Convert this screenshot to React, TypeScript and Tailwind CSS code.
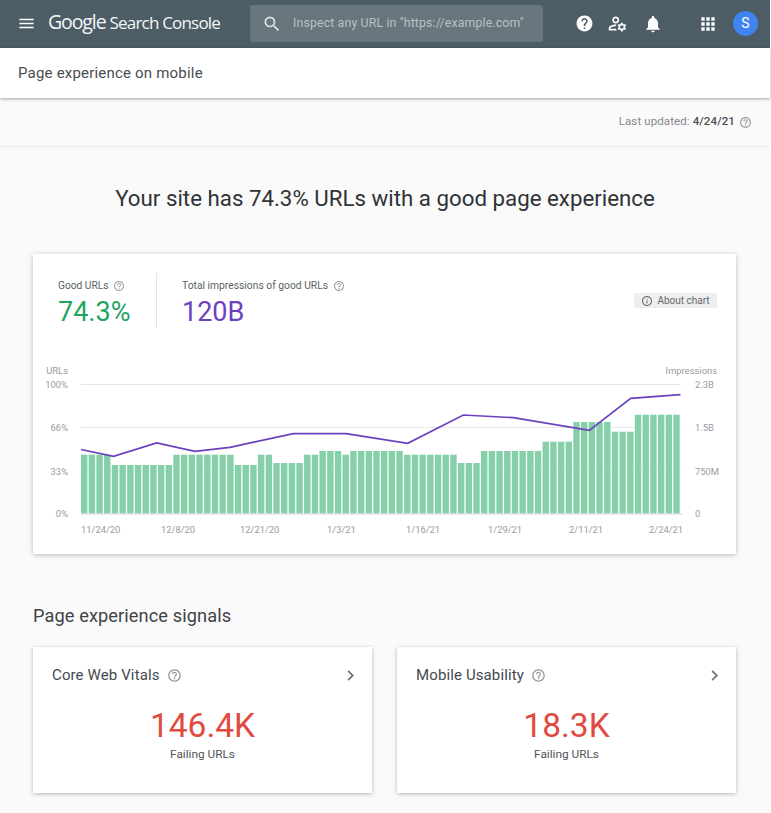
import React from "react";
import {
  MdMenu,
  MdSearch,
  MdHelp,
  MdHelpOutline,
  MdOutlineManageAccounts,
  MdNotifications,
  MdApps,
  MdChevronRight,
  MdInfoOutline,
} from "react-icons/md";

const runs: [number, number][] = [
  [4, 454.7], [8, 465], [8, 454.7], [3, 465], [2, 454.7],
  [4, 463], [2, 454.7], [3, 451], [1, 454.7], [7, 451], [7, 454.7], [3, 463],
  [8, 451], [4, 441.7], [5, 422], [3, 431.7], [6, 414.7],
];
const tops: number[] = runs.flatMap(([n, t]) => Array(n).fill(t));
const BASE = 513.5;
const PITCH = 600 / 78;

const linePoints =
  "81,449.5 113.5,456.3 156.7,443 195,451.3 230,447.3 293.3,433.7 346,433.7 407.7,443.3 463.3,415 513.3,417.7 589.3,430.3 630.7,398.3 680.5,394.7";

const xLabels: [string, number][] = [
  ["11/24/20", 81], ["12/8/20", 161], ["12/21/20", 240], ["1/3/21", 327],
  ["1/16/21", 406], ["1/29/21", 488], ["2/11/21", 569], ["2/24/21", 649],
];
const leftLabels: [string, number][] = [["100%", 388], ["66%", 431], ["33%", 474.5], ["0%", 517]];
const rightLabels: [string, number][] = [["2.3B", 388], ["1.5B", 431], ["750M", 474.5], ["0", 517]];

function Chart() {
  return (
    <svg viewBox="33 360 703 190" className="block w-[703px] h-[190px]" fontFamily="Roboto, sans-serif" fontSize="9.4" fill="#979b9f">
      {[384.5, 427.5, 470.5].map((y) => (
        <line key={y} x1={81} x2={681} y1={y} y2={y} stroke="#e6e7e9" strokeWidth="1" />
      ))}
      {tops.map((t, i) => (
        <rect key={i} x={81 + i * PITCH} y={t} width={6.4} height={BASE - t} fill="#85cfa9" />
      ))}
      <line x1={81} x2={682} y1={514} y2={514} stroke="#d5d7d9" strokeWidth="1" />
      <polyline points={linePoints} fill="none" stroke="#6b41bd" strokeWidth="1.7" />
      <text x={68} y={374} textAnchor="end">URLs</text>
      {leftLabels.map(([s, y]) => (
        <text key={s} x={68} y={y} textAnchor="end">{s}</text>
      ))}
      <text x={717} y={374} textAnchor="end">Impressions</text>
      {rightLabels.map(([s, y]) => (
        <text key={s} x={695} y={y}>{s}</text>
      ))}
      {xLabels.map(([s, x]) => (
        <text key={s} x={x} y={533}>{s}</text>
      ))}
    </svg>
  );
}

function Signal({ title, value }: { title: string; value: string }) {
  return (
    <div className="w-[339px] h-[146px] bg-white shadow-[0_1px_4px_rgba(0,0,0,0.28)] pt-[19px] px-[19px]">
      <div className="flex items-center h-[18px] text-[#444a4f]">
        <span className="text-[15px] tracking-[0.12px]">{title}</span>
        <MdHelpOutline className="ml-[7px] text-[15px] text-[#8f9497]" />
        <MdChevronRight className="ml-auto text-[21px] text-[#6d7276] mr-[-8px]" />
      </div>
      <div className="mt-[22px] text-center text-[33.5px] leading-[40px] text-[#e04a3f]">{value}</div>
      <div className="mt-[1px] text-center text-[11.8px] leading-[14px] text-[#4f5458]">Failing URLs</div>
    </div>
  );
}

export default function App() {
  return (
    <div className="w-[771px] h-[813px] overflow-hidden bg-white font-['Roboto',sans-serif]">
      <div className="w-[770px] h-[813px] bg-[#fafafa]">
        <header className="h-[48px] pb-[1px] bg-[#4c5d65] flex items-center text-white">
          <MdMenu className="ml-[17px] text-[19px]" />
          <div className="ml-[12px] mb-[3px] w-[173px] whitespace-nowrap text-[#f4f6f6] flex items-baseline">
            <span className="font-['Open_Sans',sans-serif] text-[19.5px] tracking-[-1.1px]">Google</span>
            <span className="ml-[4px] font-['Open_Sans',sans-serif] text-[17px] tracking-[-0.8px]">Search Console</span>
          </div>
          <div className="ml-[29px] w-[293px] h-[37px] rounded-[3px] bg-[#68777e] flex items-center">
            <MdSearch className="ml-[12px] text-[20px] text-[#dfe3e5]" />
            <span className="ml-[11px] text-[12.3px] tracking-[0.15px] text-[#b9c1c5] whitespace-nowrap">Inspect any URL in "https://example.com"</span>
          </div>
          <MdHelp className="ml-[32px] text-[19px]" />
          <MdOutlineManageAccounts className="ml-[13px] text-[21px]" />
          <MdNotifications className="ml-[15px] text-[20px]" />
          <MdApps className="ml-[35px] text-[20px]" />
          <div className="ml-[15px] w-[25px] h-[25px] rounded-full bg-[#3f84f0] flex items-center justify-center text-[14px]">S</div>
        </header>

        <div className="relative h-[50px] pt-[1px] bg-white shadow-[0_1px_3px_rgba(0,0,0,0.35)] flex items-center pl-[18px] text-[15px] tracking-[0.2px] text-[#484d51]">
          Page experience on mobile
        </div>

        <div className="h-[49px] border-b border-[#eaeaea] flex items-center justify-end pr-[18px] text-[11.5px] tracking-[0.1px] text-[#85898d]">
          <span>Last updated:&nbsp;</span>
          <span className="text-[#4b5054] font-medium">4/24/21</span>
          <MdHelpOutline className="ml-[4px] text-[13px] text-[#969a9d]" />
        </div>

        <h1 className="mt-[37px] text-center text-[22.3px] leading-[28px] text-[#2f3336] font-normal">
          Your site has 74.3% URLs with a good page experience
        </h1>

        <section className="ml-[33px] mt-[42px] w-[703px] h-[300px] bg-white shadow-[0_1px_5px_rgba(0,0,0,0.25)]">
          <div className="h-[106px] relative flex pt-[19px]">
            <div className="pl-[25px] pt-[6px] w-[124px] h-[55px] border-r border-[#e5e6e7]">
              <div className="flex items-center h-[14px] text-[10.2px] text-[#5a5f63]">
                Good URLs
                <MdHelpOutline className="ml-[5px] text-[12px] text-[#9a9ea1]" />
              </div>
              <div className="mt-[2px] text-[27px] leading-[34px] text-[#1fa463]">74.3%</div>
            </div>
            <div className="pl-[25px] pt-[6px]">
              <div className="flex items-center h-[14px] text-[10.3px] text-[#5a5f63]">
                Total impressions of good URLs
                <MdHelpOutline className="ml-[5px] text-[12px] text-[#9a9ea1]" />
              </div>
              <div className="mt-[2px] text-[27px] leading-[34px] text-[#6b41bd]">120B</div>
            </div>
            <div className="absolute right-[19px] top-[39px] h-[15px] w-[83px] bg-[#eeeeee] rounded-[2px] flex items-center justify-center text-[10px] text-[#64696d]">
              <MdInfoOutline className="mr-[4px] text-[12px]" />
              About chart
            </div>
          </div>
          <Chart />
        </section>

        <h2 className="ml-[33px] mt-[50px] text-[18.2px] leading-[24px] font-normal tracking-[0.1px] text-[#3f4347]">Page experience signals</h2>

        <div className="ml-[33px] mt-[19px] flex gap-[25px]">
          <Signal title="Core Web Vitals" value="146.4K" />
          <Signal title="Mobile Usability" value="18.3K" />
        </div>
      </div>
    </div>
  );
}
